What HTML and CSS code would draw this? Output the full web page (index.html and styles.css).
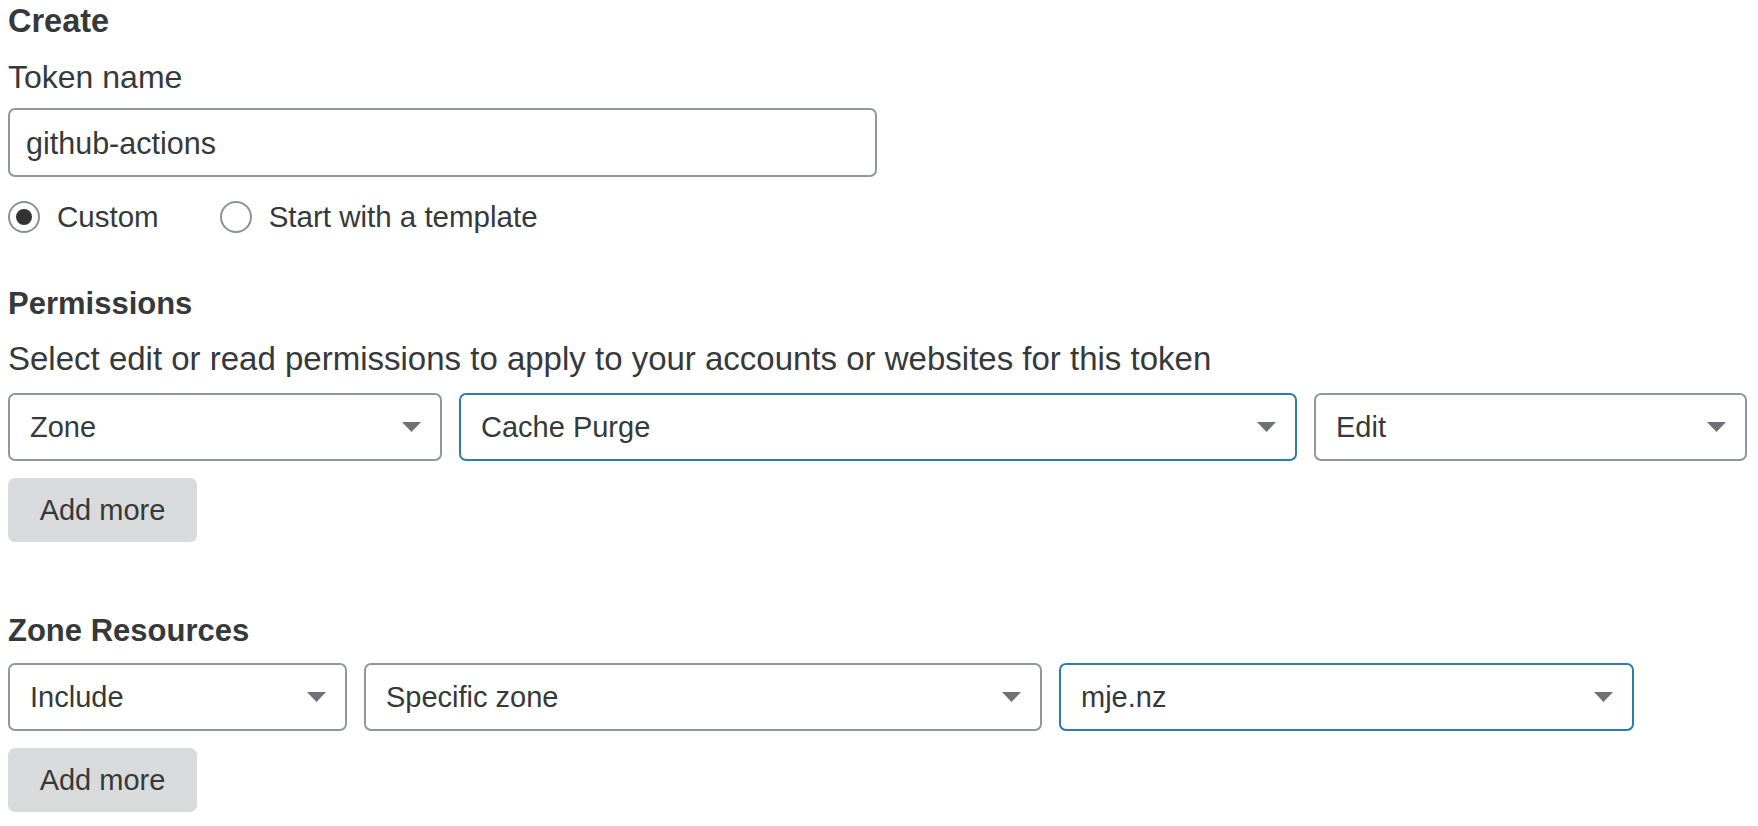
FILE: index.html
```html
<!DOCTYPE html>
<html lang="en">
<head>
<meta charset="utf-8">
<title>Create token</title>
<link rel="stylesheet" href="styles.css">
</head>
<body>
<main class="page">
  <h2 class="title title-create">Create</h2>
  <div class="label">Token name</div>
  <div class="input">github-actions</div>
  <div class="radios">
    <div class="radio-opt"><span class="radio checked"></span><span>Custom</span></div>
    <div class="radio-opt"><span class="radio"></span><span>Start with a template</span></div>
  </div>

  <h2 class="title perm-title">Permissions</h2>
  <div class="desc">Select edit or read permissions to apply to your accounts or websites for this token</div>
  <div class="row row-perm">
    <div class="select"><span>Zone</span><svg class="caret" width="19" height="10" viewBox="0 0 19 10"><path d="M0 0H19L9.5 10Z"/></svg></div>
    <div class="select focus"><span>Cache Purge</span><svg class="caret" width="19" height="10" viewBox="0 0 19 10"><path d="M0 0H19L9.5 10Z"/></svg></div>
    <div class="select"><span>Edit</span><svg class="caret" width="19" height="10" viewBox="0 0 19 10"><path d="M0 0H19L9.5 10Z"/></svg></div>
  </div>
  <button class="btn">Add more</button>

  <h2 class="title zone-title">Zone Resources</h2>
  <div class="row row-zone">
    <div class="select"><span>Include</span><svg class="caret" width="19" height="10" viewBox="0 0 19 10"><path d="M0 0H19L9.5 10Z"/></svg></div>
    <div class="select"><span>Specific zone</span><svg class="caret" width="19" height="10" viewBox="0 0 19 10"><path d="M0 0H19L9.5 10Z"/></svg></div>
    <div class="select focus"><span>mje.nz</span><svg class="caret" width="19" height="10" viewBox="0 0 19 10"><path d="M0 0H19L9.5 10Z"/></svg></div>
  </div>
  <button class="btn">Add more</button>
</main>
</body>
</html>
```

FILE: styles.css
```css
* { box-sizing: border-box; }

html, body {
  margin: 0;
  background: #ffffff;
}

body {
  font-family: "Liberation Sans", Arial, sans-serif;
  font-size: 32px;
  line-height: 36px;
  color: #36393a;
}

.page {
  display: flex;
  flex-direction: column;
  align-items: flex-start;
  padding: 3px 11px 0 8px;
}

.title {
  margin: 0;
  font-size: 31px;
  line-height: 36px;
  font-weight: 700;
  color: #36393a;
}

.title-create {
  font-size: 32.5px;
}

.label {
  margin-top: 20px;
}

.input {
  margin-top: 13px;
  width: 869px;
  height: 69px;
  border: 2px solid #92979b;
  border-radius: 7px;
  padding: 0 16px;
  display: flex;
  align-items: center;
  font-size: 30.5px;
}

.radios {
  margin-top: 22px;
  display: flex;
  gap: 61px;
  height: 36px;
  align-items: center;
  font-size: 29.5px;
}

.radio-opt {
  display: flex;
  align-items: center;
  gap: 17px;
}

.radio {
  width: 32px;
  height: 32px;
  border: 2px solid #8d9195;
  border-radius: 50%;
  display: flex;
  align-items: center;
  justify-content: center;
  background: #fff;
}

.radio.checked::after {
  content: "";
  width: 16px;
  height: 16px;
  border-radius: 50%;
  background: #333333;
}

.perm-title {
  margin-top: 51px;
}

.desc {
  margin-top: 19px;
  font-size: 33px;
}

.row {
  display: grid;
  gap: 17px;
  align-self: stretch;
}

.row-perm {
  margin-top: 16px;
  grid-template-columns: 434px 838px 433px;
}

.row-zone {
  margin-top: 14px;
  grid-template-columns: 339px 678px 575px;
}

.select {
  height: 68px;
  border: 2px solid #92979b;
  border-radius: 7px;
  padding: 0 19px 0 20px;
  display: flex;
  align-items: center;
  justify-content: space-between;
  background: #fff;
  font-size: 29px;
}

.select.focus {
  border-color: #2c7cb0;
}

.caret {
  flex: none;
  fill: #6e7276;
}

.btn {
  margin-top: 17px;
  width: 189px;
  height: 64px;
  border: 0;
  border-radius: 7px;
  background: #d9dadb;
  font-family: "Liberation Sans", Arial, sans-serif;
  font-size: 29px;
  color: #36393a;
  padding: 0;
}

.zone-title {
  margin-top: 71px;
}
```
